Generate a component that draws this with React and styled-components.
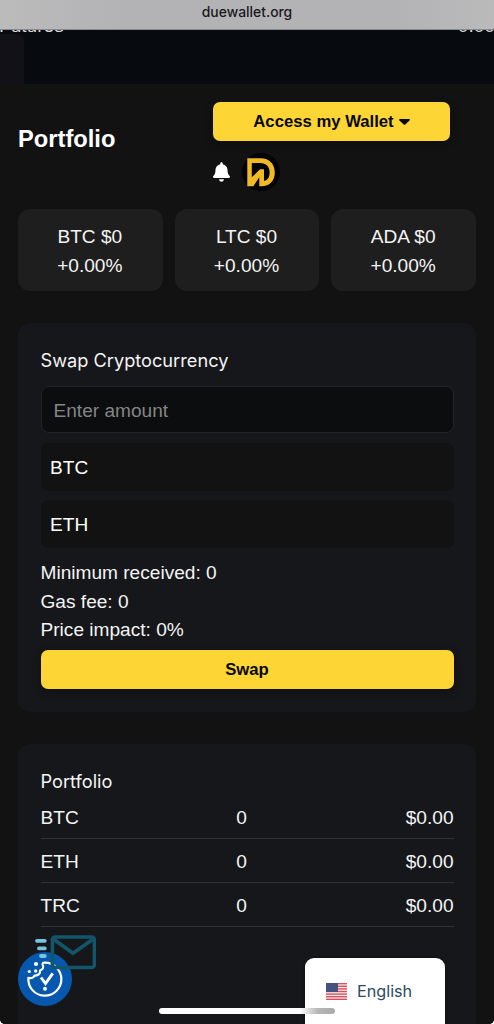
import React from "react";
import styled, { createGlobalStyle } from "styled-components";

const coins = ["BTC", "LTC", "ADA"];
const holdings = ["BTC", "ETH", "TRC"];

const Logo = () => (
  <LogoCircle>
    <svg width="38" height="38" viewBox="0 0 38 38">
      <path
        fillRule="evenodd"
        fill="#f1ba24"
        d="M5.3 5.300H18.500C27.500 5.300 32.800 11 32.800 19.500C32.800 28 27.500 33.300 19.500 33.300H17.300V24.300L11.300 33.300H5.300V5.300ZM9.800 10V24.300L18 16.300H22V28C26 27 27.600 24 27.600 19.500C27.600 13.500 24.200 10 18 10H9.800Z"
      />
    </svg>
  </LogoCircle>
);

const Bell = () => (
  <svg width="17" height="20" viewBox="0 0 448 512" fill="#fff">
    <path d="M224 0c-18 0-32 14-32 32v19C119 66 64 130 64 208v19c0 47-17 92-48 127l-8 9c-8 9-10 22-5 33s16 18 29 18h384c13 0 24-7 29-18s3-24-5-33l-8-9c-31-35-48-80-48-127v-19c0-78-55-142-128-157V32c0-18-14-32-32-32zM288 448H160c0 17 7 33 19 45s28 19 45 19 33-7 45-19 19-28 19-45z" />
  </svg>
);

const Flag = () => (
  <svg width="21" height="17" viewBox="0 0 21 17">
    <rect width="21" height="17" fill="#f5eff0" />
    {[0, 2.6, 5.2, 7.8, 10.4, 13, 15.6].map((y) => (
      <rect key={y} y={y} width="21" height="1.4" fill="#d9505f" />
    ))}
    <rect width="12" height="9" fill="#43527f" />
  </svg>
);

const Mail = () => (
  <MailIcon width="62" height="36" viewBox="0 0 62 36" fill="none">
    <g stroke="#75c5df" strokeWidth="3.8" strokeLinecap="round">
      <path d="M3 6.800h7.800M5 14.400h5.800M7 22h3.800" />
    </g>
    <rect x="18.400" y="3" width="42" height="30.500" rx="3" stroke="#12566c" strokeWidth="3.600" />
    <path d="M20 5.500l19 13.800L58.500 5.500" stroke="#12566c" strokeWidth="3.600" />
  </MailIcon>
);

const Cookie = () => (
  <CookieButton>
    <svg width="54" height="54" viewBox="0 0 54 54" fill="none">
      <path
        d="M26 10.700A16.500 16.500 0 1 1 10.400 25.800C13.500 26.800 16 25.500 16.500 23.500C20.500 24 22.500 21 22 18.500C25 17.500 26 15 24.700 12.800C24.400 11.500 25 10.700 26 10.700Z"
        stroke="#fff"
        strokeWidth="2.200"
        strokeLinejoin="round"
      />
      <circle cx="18" cy="12" r="2.100" fill="#fff" />
      <circle cx="11.300" cy="19.500" r="1.600" fill="#fff" />
      <circle cx="17.700" cy="19" r="1.700" fill="#fff" />
      <path d="M23 25.500l4.500 6L34.700 21.300" stroke="#fff" strokeWidth="2.900" />
      <circle cx="27" cy="36.700" r="2" fill="#fff" />
    </svg>
  </CookieButton>
);

const App = () => {
  return (
    <Wrapper>
      <GlobalStyle />
      <AddressBar>duewallet.org</AddressBar>
      <Market>
        <MarketRow>
          <span>Futures</span>
          <span>0.00</span>
        </MarketRow>
        <MarketTab />
      </Market>
      <Header>
        <Title>Portfolio</Title>
        <Actions>
          <AccessButton>
            Access my Wallet
            <svg width="11" height="6" viewBox="0 0 11 6">
              <path d="M.8 0h9.400q1.200.5.300 1.400L6.300 5.500q-.8.600-1.600 0L.5 1.400Q-.4.500.8 0z" fill="#080803" />
            </svg>
          </AccessButton>
          <IconRow>
            <Bell />
            <Logo />
          </IconRow>
        </Actions>
      </Header>
      <Prices>
        {coins.map((coin) => (
          <PriceCard key={coin}>
            <div>{coin} $0</div>
            <div>+0.00%</div>
          </PriceCard>
        ))}
      </Prices>
      <Panel>
        <PanelTitle>Swap Cryptocurrency</PanelTitle>
        <Input placeholder="Enter amount" />
        <Select>BTC</Select>
        <Select>ETH</Select>
        <Details>
          <div>Minimum received: 0</div>
          <div>Gas fee: 0</div>
          <div>Price impact: 0%</div>
        </Details>
        <Button>Swap</Button>
      </Panel>
      <Panel $tall>
        <PanelTitle>Portfolio</PanelTitle>
        {holdings.map((coin) => (
          <Holding key={coin}>
            <span>{coin}</span>
            <span>0</span>
            <span>$0.00</span>
          </Holding>
        ))}
      </Panel>
      <Cookie />
      <Mail />
      <Language>
        <Flag />
        English
      </Language>
      <HomeBar />
      <Corner />
      <Corner $right />
    </Wrapper>
  );
};

export default App;

const GlobalStyle = createGlobalStyle`
  * {
    box-sizing: border-box;
  }
  body {
    margin: 0;
    background: #121212;
    overflow: hidden;
  }
`;

const Wrapper = styled.div`
  position: relative;
  width: 494px;
  height: 1024px;
  overflow: hidden;
  background: #121212;
  color: #f4f4f4;
  font-family: "Liberation Sans", Arial, sans-serif;
  font-size: 19.1px;
`;

const AddressBar = styled.div`
  height: 30px;
  background: linear-gradient(90deg, #bbbbbc, #b3b3b5 25%, #b3b3b5 80%, #bababb);
  border-bottom: 1px solid #858a8e;
  color: #19191b;
  font: 500 13.9px/24px Inter, sans-serif;
  text-align: center;
`;

const Market = styled.div`
  height: 54px;
  background: #070b10;
  overflow: hidden;
`;

const MarketRow = styled.div`
  display: flex;
  justify-content: space-between;
  height: 4px;
  margin: 0 -1px;
  line-height: 22px;
  color: #d5d7d9;

  span {
    margin-top: -15px;
  }
`;

const MarketTab = styled.div`
  width: 24px;
  height: 50px;
  background: #121117;
  border-radius: 0 8px 0 0;
`;

const Header = styled.header`
  display: flex;
  height: 125px;
  padding: 18px 44px 0 18px;
  justify-content: space-between;
`;

const Title = styled.h1`
  margin: 22px 0 0;
  font-size: 23.7px;
  line-height: 30px;
  font-weight: 700;
  color: #fff;
`;

const Actions = styled.div`
  width: 237px;
`;

const Button = styled.button`
  display: flex;
  align-items: center;
  justify-content: center;
  width: 100%;
  height: 39px;
  padding: 0;
  border: 0;
  border-radius: 7px;
  background: #fdd535;
  box-shadow: 0 3px 8px rgba(0, 0, 0, 0.3);
  color: #080803;
  font: 700 16.7px "Liberation Sans", Arial, sans-serif;
`;

const AccessButton = styled(Button)`
  gap: 5px;
`;

const IconRow = styled.div`
  display: flex;
  align-items: center;
  gap: 12px;
  margin-top: 12px;
`;

const LogoCircle = styled.div`
  width: 38px;
  height: 38px;
  border-radius: 50%;
  background: #020202;
`;

const Prices = styled.div`
  display: grid;
  grid-template-columns: repeat(3, 1fr);
  gap: 12px;
  padding: 0 18px;
  margin-bottom: 32px;
`;

const PriceCard = styled.div`
  height: 81.5px;
  padding-top: 12.5px;
  padding-right: 1px;
  border-radius: 12px;
  background: #1e1e1e;
  line-height: 29px;
  text-align: center;
`;

const Panel = styled.section`
  height: ${(props) => (props.$tall ? "320px" : "389.5px")};
  margin: 0 18px 32px;
  padding: 23px 22.5px;
  border-radius: 12px;
  background: #16171b;
`;

const PanelTitle = styled.h2`
  margin: 0;
  font: 400 18.2px/29px Inter, sans-serif;
`;

const Input = styled.input`
  display: block;
  width: 100%;
  height: 47px;
  margin: 11.5px 0 10px;
  padding: 2px 12px 0;
  border: 1px solid #222325;
  border-radius: 8px;
  background: #0c0d0f;
  font: 19.1px "Liberation Sans", Arial, sans-serif;

  &::placeholder {
    color: #858585;
  }
`;

const Select = styled.div`
  height: 47.5px;
  margin-bottom: 9.5px;
  padding-left: 9.5px;
  border-radius: 7px;
  background: #121212;
  line-height: 49px;
  color: #fff;
`;

const Details = styled.div`
  margin-top: 11.4px;
  margin-bottom: 5px;
  line-height: 28.8px;
`;

const Holding = styled.div`
  display: grid;
  grid-template-columns: 191px 20px 1fr;
  height: 44.2px;
  border-bottom: 1px solid #303134;
  line-height: 45px;
  text-align: center;

  span:first-child {
    text-align: left;
  }
  span:last-child {
    text-align: right;
  }
  ${PanelTitle} + & {
    height: 43px;
    line-height: 43px;
  }
`;

const CookieButton = styled.div`
  position: absolute;
  left: 18px;
  top: 952px;
  width: 54px;
  height: 54px;
  border-radius: 50%;
  background: #0558ad;
`;

const MailIcon = styled.svg`
  position: absolute;
  left: 34px;
  top: 934px;
`;

const Language = styled.div`
  position: absolute;
  left: 305px;
  top: 958px;
  display: flex;
  align-items: center;
  gap: 10px;
  width: 140px;
  height: 66px;
  padding-left: 21px;
  border-radius: 9px 9px 0 0;
  background: #fff;
  box-shadow: 0 0 3px rgba(0, 0, 0, 0.5);
  color: #294b61;
  font: 400 16.2px Inter, sans-serif;
`;

const HomeBar = styled.div`
  position: absolute;
  left: 159px;
  top: 1008px;
  width: 176px;
  height: 6px;
  border-radius: 3px;
  background: linear-gradient(90deg, #fff 80%, #b8b8b8 90%, #aaa);
`;

const Corner = styled.div`
  position: absolute;
  bottom: 0;
  ${(props) => (props.$right ? "right: 0;" : "left: 0;")}
  width: 4px;
  height: 4px;
  background: radial-gradient(circle at ${(props) => (props.$right ? "0 0" : "100% 0")}, transparent 3.5px, #fff 4px);
`;
